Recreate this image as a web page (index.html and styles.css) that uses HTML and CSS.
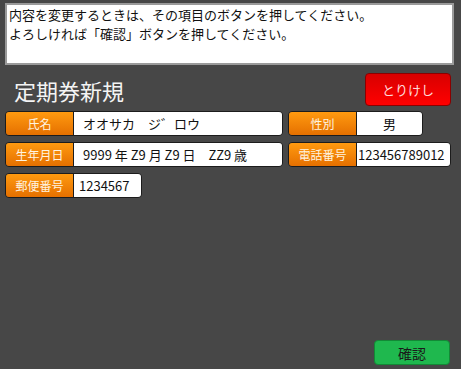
FILE: index.html
```html
<!DOCTYPE html>
<html>
<head lang="ja">
    <meta charset="UTF-8">
    <title>定期券新規</title>
    <link rel="stylesheet" href="styles.css">
</head>
<body>
<div class="page">
    <div class="message">
        <p>内容を変更するときは、その項目のボタンを押してください。</p>
        <p>よろしければ「確認」ボタンを押してください。</p>
    </div>
    <div class="head">
        <h1 class="title">定期券新規</h1>
        <button class="btn cancel">とりけし</button>
    </div>
    <div class="rows">
        <div class="row">
            <div class="field w-name">
                <span class="label">氏名</span>
                <span class="value pad">オオサカ　ジ゛ロウ</span>
            </div>
            <div class="field w-sex">
                <span class="label">性別</span>
                <span class="value center">男</span>
            </div>
        </div>
        <div class="row">
            <div class="field w-name">
                <span class="label">生年月日</span>
                <span class="value pad">9999 年 Z9 月 Z9 日　ZZ9 歳</span>
            </div>
            <div class="field w-tel">
                <span class="label">電話番号</span>
                <span class="value tight">123456789012</span>
            </div>
        </div>
        <div class="row">
            <div class="field w-zip">
                <span class="label">郵便番号</span>
                <span class="value small">1234567</span>
            </div>
        </div>
    </div>
    <div class="foot">
        <button class="btn ok">確認</button>
    </div>
</div>
</body>
</html>
```

FILE: styles.css
```css
* {
    margin: 0;
    padding: 0;
    box-sizing: border-box;
}

html, body {
    height: 100%;
}

body {
    background: #474747;
    font-family: "Noto Sans CJK JP", "DejaVu Sans", sans-serif;
}

.page {
    height: 100%;
    display: flex;
    flex-direction: column;
    padding: 3px 7px 4px 5px;
}

.message {
    height: 62px;
    background: #fff;
    border: 2px solid #9a9a9a;
    padding: 0 0 0 2px;
    font-size: 13px;
    line-height: 19px;
    color: #111;
}

.head {
    display: flex;
    justify-content: space-between;
    align-items: center;
    margin-top: 7px;
    height: 34px;
}

.title {
    font-size: 22px;
    line-height: 28px;
    font-weight: normal;
    color: #f4f4f4;
    margin-left: 9px;
    margin-top: 1px;
}

.btn {
    font-family: inherit;
    font-size: 13px;
    border-radius: 4px;
    cursor: pointer;
}

.cancel {
    width: 86px;
    height: 33px;
    margin-right: 3px;
    background: linear-gradient(#d80000, #ff0000);
    border: 1px solid #8a0000;
    color: #ffd8d8;
}

.rows {
    display: flex;
    flex-direction: column;
    gap: 6px;
    margin-top: 5px;
}

.row {
    display: flex;
    gap: 5px;
}

.field {
    display: flex;
    height: 25px;
    border: 1px solid #1c1c1c;
    border-radius: 4px;
    overflow: hidden;
    font-size: 13px;
}

.label {
    width: 68px;
    flex: none;
    display: flex;
    align-items: center;
    justify-content: center;
    background: linear-gradient(#ff9a10, #e57000);
    border-right: 1px solid #1c1c1c;
    color: #fff4e0;
    font-size: 12px;
}

.value {
    flex: 1;
    display: flex;
    align-items: center;
    background: #fff;
    color: #111;
    white-space: nowrap;
}

.pad {
    padding-left: 9px;
}

.small {
    padding-left: 5px;
}

.tight {
    padding-left: 1px;
}

.center {
    justify-content: center;
}

.w-name {
    width: 278px;
}

.w-sex {
    width: 135px;
}

.w-tel {
    width: 163px;
}

.w-zip {
    width: 137px;
}

.foot {
    margin-top: auto;
    display: flex;
    justify-content: flex-end;
}

.ok {
    width: 76px;
    height: 25px;
    margin-right: 4px;
    background: #1fb84e;
    border: 1px solid #128a36;
    color: #1a1a1a;
    font-size: 14px;
}
```
